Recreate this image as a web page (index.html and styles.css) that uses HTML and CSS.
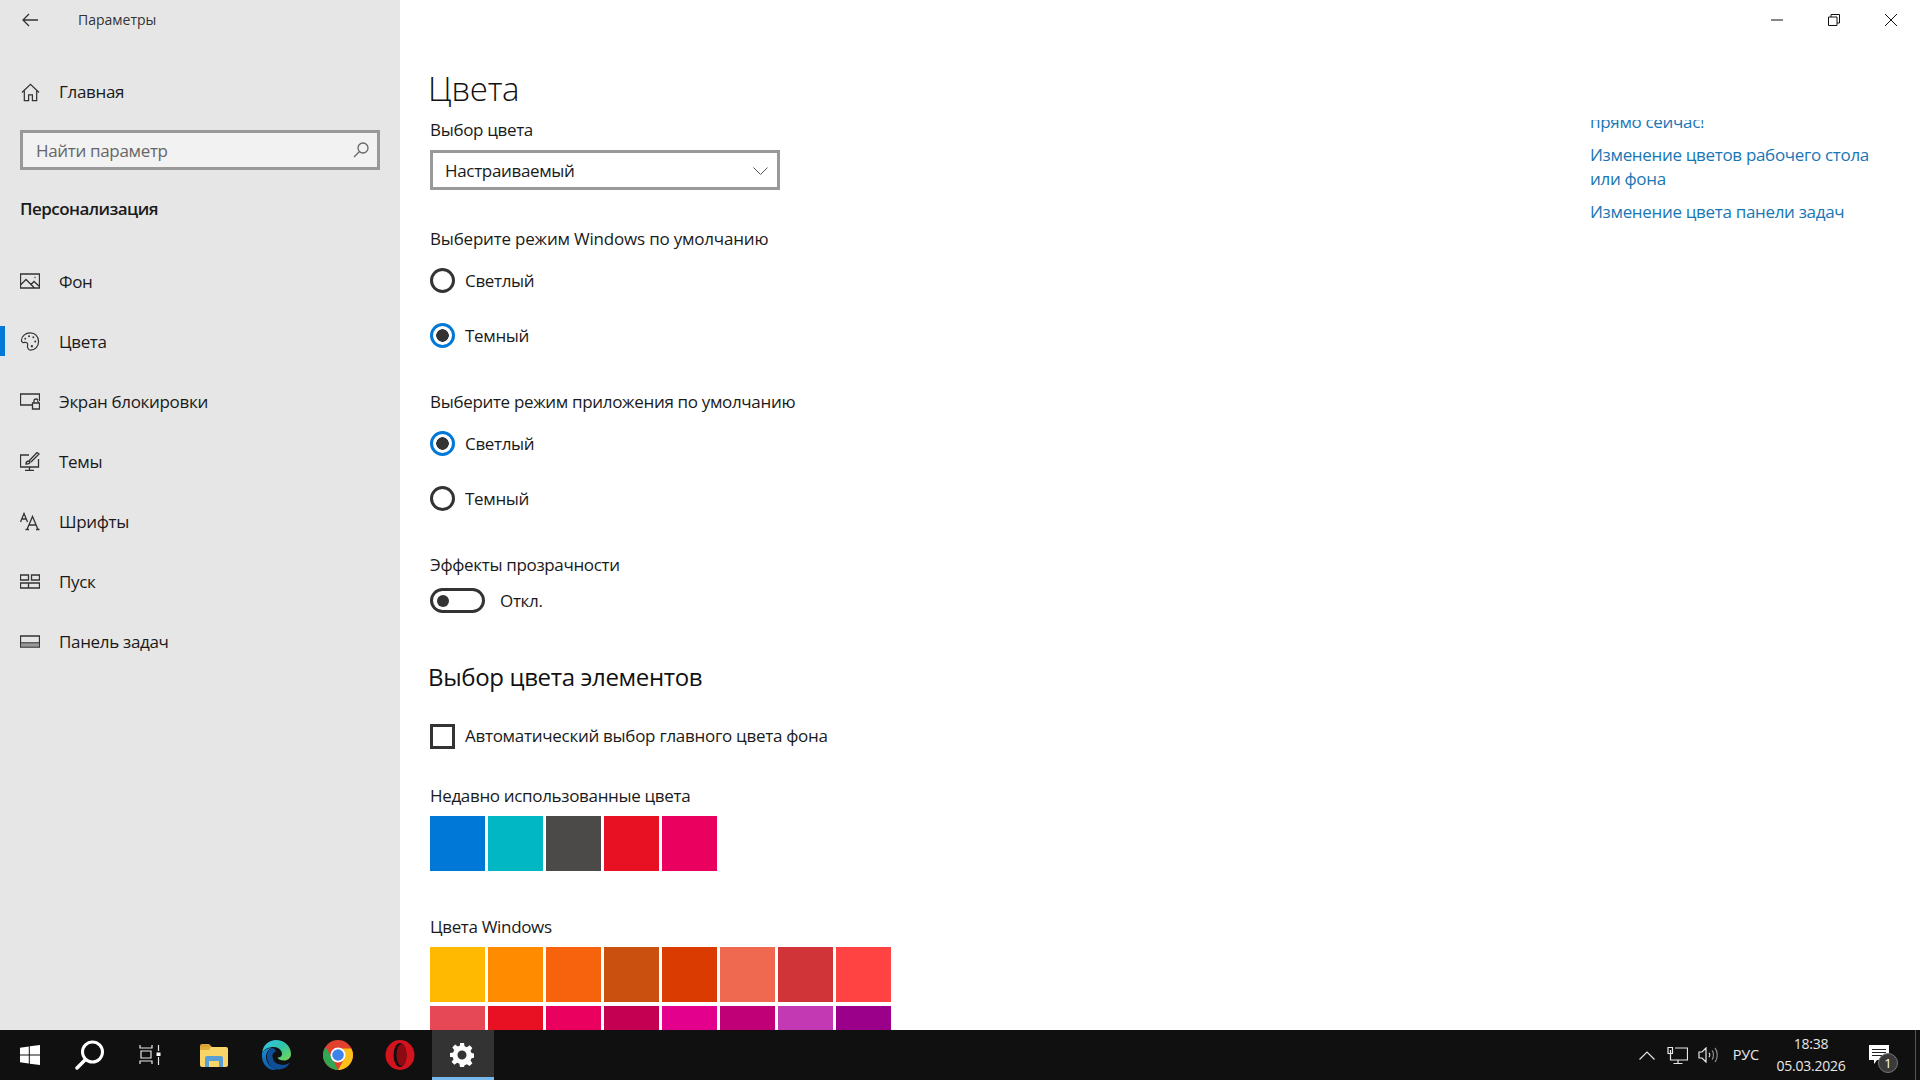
FILE: index.html
```html
<!DOCTYPE html>
<html lang="ru">
<head>
<meta charset="utf-8">
<title>Параметры</title>
<link rel="stylesheet" href="styles.css">
</head>
<body>
<div class="window">
  <aside class="sidebar">
    <div class="appbar">
      <svg class="ico back" viewBox="0 0 16 14"><path d="M7 1 1 7l6 6M1 7h15"/></svg>
      <span class="apptitle">Параметры</span>
    </div>
    <div class="home">
      <svg class="ico navico" viewBox="0 0 20 20"><path d="M1 10 10 1.500 19 10M3.500 8v10.500h4.500v-6h4v6h4.500V8"/></svg>
      <span>Главная</span>
    </div>
    <div class="search">
      <span>Найти параметр</span>
      <svg class="ico searchico" viewBox="0 0 16 16"><circle cx="10" cy="6" r="5"/><path d="M6.500 9.500 1 15"/></svg>
    </div>
    <div class="section">Персонализация</div>
    <nav class="nav">
      <div class="navitem">
        <svg class="ico navico" viewBox="0 0 20 16"><path d="M.5.5h19v14H.5zM.5 11.500 6 6l8.500 8.500M11 11l3-3 5.500 5M.5 14.500h19"/><path d="M14.500 4h1"/></svg>
        <span>Фон</span>
      </div>
      <div class="navitem active">
        <svg class="ico navico" viewBox="0 0 20 20"><path d="M10.500 1C5 1 1 4.500 1 9c0 1.500 1.500 2.500 3 2 2-.5 4 .500 3.500 2.500-.5 2 0 5.500 3 5.500 5 0 8.500-4 8.500-9s-3.500-9-8.500-9z"/><circle class="dot" cx="5" cy="7" r="1"/><circle class="dot" cx="9" cy="4.500" r="1"/><circle class="dot" cx="13.500" cy="5.500" r="1"/><circle class="dot" cx="15.500" cy="10" r="1"/><circle class="dot" cx="12" cy="15" r="1.200"/></svg>
        <span>Цвета</span>
      </div>
      <div class="navitem">
        <svg class="ico navico" viewBox="0 0 20 16"><path d="M12 11.500H.5V.5h19v7M12.500 9.500h7v6h-7zM14 9.500V7.500a2 2 0 0 1 4 0v2"/></svg>
        <span>Экран блокировки</span>
      </div>
      <div class="navitem">
        <svg class="ico navico" viewBox="0 0 20 19"><path d="M9 3H.5v12h18V7M9.500 15v3M5 18.500h9"/><path d="M6 12c0-2 1-3 3-3l1 1c0 2-2 2-4 2zM9 9l8-8.500 2 1.500-8 8"/></svg>
        <span>Темы</span>
      </div>
      <div class="navitem">
        <svg class="ico navico" viewBox="0 0 20 17"><path d="M.5 9 4 .5 7.500 9M2 6h4M7 16.500 12.500 3.500l5.500 13M9 12h7M5.500 16.500h3.500M16 16.500h3.500"/></svg>
        <span>Шрифты</span>
      </div>
      <div class="navitem">
        <svg class="ico navico" viewBox="0 0 20 14"><path d="M.5.500h8v5h-8zM11.500.500h8v5h-8zM.5 8.500h8v5h-8zM8.500 8.500h11v5h-11z"/></svg>
        <span>Пуск</span>
      </div>
      <div class="navitem">
        <svg class="ico navico" viewBox="0 0 20 12"><path d="M.5.500h19v11H.5zM.5 7.500h19"/><path class="fillbar" d="M1 8h18v3H1z"/></svg>
        <span>Панель задач</span>
      </div>
    </nav>
  </aside>

  <main class="main">
    <div class="titlebar">
      <div class="winbtn"><svg class="ico winico" viewBox="0 0 12 12"><path d="M0 6h12"/></svg></div>
      <div class="winbtn"><svg class="ico winico" viewBox="0 0 12 12"><path d="M.5 3h8.500v8.500H.5zM3 3V.5h8.500V9H9"/></svg></div>
      <div class="winbtn"><svg class="ico winico" viewBox="0 0 12 12"><path d="M0 0l12 12M12 0 0 12"/></svg></div>
    </div>
    <div class="columns">
      <section class="content">
        <h1 class="h1">Цвета</h1>
        <div class="label m9">Выбор цвета</div>
        <div class="select m8">
          <span>Настраиваемый</span>
          <svg class="ico chev" viewBox="0 0 15 8"><path d="M.5.5l7 7 7-7"/></svg>
        </div>
        <div class="label m37 latin">Выберите режим Windows по умолчанию</div>
        <div class="radio first"><i class="circle"></i><span>Светлый</span></div>
        <div class="radio"><i class="circle on"></i><span>Темный</span></div>
        <div class="label m28">Выберите режим приложения по умолчанию</div>
        <div class="radio first"><i class="circle on"></i><span>Светлый</span></div>
        <div class="radio"><i class="circle"></i><span>Темный</span></div>
        <div class="label m28">Эффекты прозрачности</div>
        <div class="toggle-row"><i class="toggle"><b></b></i><span>Откл.</span></div>
        <h2 class="h2">Выбор цвета элементов</h2>
        <div class="check-row"><i class="check"></i><span>Автоматический выбор главного цвета фона</span></div>
        <div class="label m34">Недавно использованные цвета</div>
        <div class="swatches m8">
          <i class="c1"></i><i class="c2"></i><i class="c3"></i><i class="c4"></i><i class="c5"></i>
        </div>
        <div class="label m44">Цвета Windows</div>
        <div class="swatches m8">
          <i class="w1"></i><i class="w2"></i><i class="w3"></i><i class="w4"></i><i class="w5"></i><i class="w6"></i><i class="w7"></i><i class="w8"></i>
          <i class="w9"></i><i class="c4"></i><i class="c5"></i><i class="w12"></i><i class="w13"></i><i class="w14"></i><i class="w15"></i><i class="w16"></i>
        </div>
      </section>
      <aside class="help">
        <div class="help-inner">
          <div class="link">прямо сейчас!</div>
          <div class="link gap">Изменение цветов рабочего стола или фона</div>
          <div class="link gap">Изменение цвета панели задач</div>
        </div>
      </aside>
    </div>
  </main>
</div>

<footer class="taskbar">
  <div class="tb tb-start"><svg class="tbico" width="20" height="20" viewBox="0 0 20 20"><path class="white" d="M0 2.800 8.800 1.500v8H0zM9.800 1.300 20 0v9.500H9.800zM0 10.500h8.800v8L0 17.200zM9.800 10.500H20V20L9.800 18.700z"/></svg></div>
  <div class="tb"><svg class="tbico line-w" width="30" height="30" viewBox="0 0 30 30"><circle cx="17.500" cy="12" r="10"/><path class="thick" d="M10.500 19.500 2 28"/></svg></div>
  <div class="tb"><svg class="tbico thin-w" width="26" height="20" viewBox="0 0 26 20"><path d="M1 0v3h12V0M1 19v-3h12v3M2 6h10v7H2zM19.500 0v6M19.500 12v8"/><path class="white" d="M17.500 7.500h4v3.500h-4z"/></svg></div>
  <div class="tb"><svg class="tbico" width="28" height="24" viewBox="0 0 28 24"><path fill="#d9a336" d="M0 3a2 2 0 0 1 2-2h7l3 3h-12z"/><path fill="#f9d568" d="M0 4h26a2 2 0 0 1 2 2v16a2 2 0 0 1-2 2H2a2 2 0 0 1-2-2z"/><path fill="#e0ae3c" d="M0 4h11l-2 3H0z"/><path fill="#5a9fd4" d="M5 24V15a2 2 0 0 1 2-2h14a2 2 0 0 1 2 2v9h-4v-6h-10v6z"/></svg></div>
  <div class="tb"><svg class="tbico" width="30" height="30" viewBox="0 0 30 30"><defs><linearGradient id="eg" x1="0" y1="0" x2="1" y2="1"><stop offset="0" stop-color="#35c1f1"/><stop offset=".5" stop-color="#2fc4a8"/><stop offset="1" stop-color="#7cd64a"/></linearGradient><linearGradient id="eb" x1="0" y1="0" x2="0" y2="1"><stop offset="0" stop-color="#1b8fd6"/><stop offset="1" stop-color="#0c59a4"/></linearGradient></defs><path fill="url(#eg)" d="M1 13C2 5 8 0 15 0c8 0 15 6 15 14 0 4-3 6.500-7 6.500-3 0-6-1-6.500-3 2.500 0 4.500-1 4.500-3.500 0-4-4-7-8-7-5 0-10 2-12 6z"/><path fill="url(#eb)" d="M1 13c3-4 7-5 10-5-4 1-6 5-6 9 0 6 5 11 11 12-1 0-2 1-3 1C6 30 0 23 1 13z"/><path fill="#0e4f98" d="M11 8c-4 2-5.500 6-5 10 .5 6 6 11.500 11 11.500 5 0 9-2 12-7-3 2-6 3-10 2-5-1-7-4-7.500-8C11 14 13 12 15 11.500c-1-2-2-3.500-4-3.500z"/></svg></div>
  <div class="tb"><svg class="tbico" width="30" height="30" viewBox="0 0 30 30"><circle cx="15" cy="15" r="15" fill="#e3412f"/><path fill="#fbc118" d="M15 8.500h13.200C29.500 10.500 30 13 30 15c0 8-6.500 15-15 15l6.500-11.500z"/><path fill="#33a651" d="M2.500 7 9.500 18.500 15 30C7 30 0 23 0 15c0-3 1-6 2.500-8z"/><circle cx="15" cy="15" r="7.500" fill="#fff"/><circle cx="15" cy="15" r="5.800" fill="#3f83ea"/></svg></div>
  <div class="tb"><svg class="tbico" width="30" height="30" viewBox="0 0 30 30"><ellipse cx="15" cy="15" rx="14.500" ry="15" fill="#d3141e"/><ellipse cx="15" cy="15" rx="6.500" ry="12" fill="#101010"/><ellipse cx="16.500" cy="15" rx="5" ry="11" fill="#8d0a12"/></svg></div>
  <div class="tb tb-active"><svg class="tbico" width="24" height="24" viewBox="0 0 24 24"><path class="white" fill-rule="evenodd" d="M10 0h4l.6 3.200 2.300 1 2.700-1.900 2.800 2.800-1.900 2.700 1 2.300 3.200.6v4l-3.200.6-1 2.300 1.900 2.700-2.800 2.800-2.700-1.900-2.300 1L14 24h-4l-.6-3.200-2.300-1-2.700 1.900-2.800-2.800 1.900-2.700-1-2.300L0 14v-4l3.200-.6 1-2.300-1.900-2.700 2.800-2.800 2.700 1.900 2.300-1zM12 7.500a4.500 4.500 0 1 0 0 9 4.500 4.500 0 0 0 0-9z"/></svg></div>
  <div class="tray">
    <svg class="trayico thin-w wide" width="16" height="9" viewBox="0 0 16 9"><path d="M.5 8.500 8 1l7.500 7.500"/></svg>
    <svg class="trayico thin-w net" width="21" height="17" viewBox="0 0 21 17"><path d="M3.500 3V13h17V1H8M11 13v3M6.500 16.500h9M1 .500h4.500v6H1z"/></svg>
    <svg class="trayico thin-w spk" width="21" height="16" viewBox="0 0 21 16"><path d="M1 5h3l4-4v14l-4-4H1zM11 6c1 1 1 3 0 4"/><path class="wave" d="M14 3.500c2 2 2 7 0 9M17 1c3 3.500 3 10.500 0 14"/></svg>
    <span class="lang">РУС</span>
    <div class="clock"><span>18:38</span><span>05.03.2026</span></div>
    <div class="notif">
      <svg width="20" height="20" viewBox="0 0 20 20"><path class="white" d="M0 0h20v15H8l-3 4v-4H0z"/><path class="darkline" d="M3 4.500h14M3 7.500h14M3 10.500h10"/></svg>
      <span class="badge">1</span>
    </div>
  </div>
  <i class="tb-edge"></i>
</footer>
</body>
</html>
```
FILE: styles.css
```css
* { box-sizing: border-box; }
html, body { margin: 0; padding: 0; height: 100%; overflow: hidden; }
body {
  display: flex;
  flex-direction: column;
  width: 1920px;
  height: 1080px;
  background: #fff;
  color: #1a1a1a;
  font-family: "Open Sans", "Noto Sans", sans-serif;
  font-size: 17px;
  letter-spacing: -0.33px;
  line-height: 24px;
}
i { display: block; font-style: normal; }
.ico { fill: none; stroke: #333; stroke-width: 1.3; display: block; }

.window { display: flex; height: 1030px; overflow: hidden; }

/* sidebar */
.sidebar { width: 400px; flex: none; background: #e6e6e6; }
.appbar { display: flex; align-items: center; height: 40px; padding-left: 22px; }
.back { width: 16px; height: 14px; }
.apptitle { margin-left: 40px; font-size: 14px; color: #333; letter-spacing: 0; }
.home { display: flex; align-items: center; height: 24px; margin-top: 40px; padding-left: 21px; }
.navico { width: 19px; height: 19px; margin-right: 19px; flex: none; }
.search {
  display: flex;
  justify-content: space-between;
  align-items: center;
  height: 40px;
  margin: 26px 20px 0;
  padding: 2px 8px 0 13px;
  background: #f2f2f2;
  border: 3px solid #999;
  color: #666;
}
.searchico { width: 16px; height: 16px; stroke: #666; margin-top: -2px; }
.section { margin: 27px 0 0 20px; font-weight: 600; letter-spacing: -0.55px; color: #1a1a1a; }
.nav { margin-top: 31px; }
.navitem { display: flex; align-items: center; height: 60px; padding-left: 20px; position: relative; }
.navitem .navico { width: 20px; margin-top: -2px; }
.navitem.active::before { content: ""; position: absolute; left: 0; top: 14px; width: 5px; height: 30px; background: #0078d7; }
.dot { fill: #333; stroke: none; }
.fillbar { fill: #999; stroke: none; }

/* main */
.main { flex: 1; min-width: 0; display: flex; flex-direction: column; }
.titlebar { display: flex; justify-content: flex-end; height: 40px; flex: none; }
.winbtn { width: 57px; display: flex; align-items: center; justify-content: flex-start; padding-left: 22px; }
.winico { width: 12px; height: 12px; stroke: #111; stroke-width: 1; }
.columns { flex: 1; display: flex; justify-content: space-between; padding-left: 30px; min-height: 0; }
.content { width: 520px; }
.h1 { margin: 29px 0 0 -2px; font-size: 33px; font-weight: 300; line-height: 40px; letter-spacing: -0.3px; color: #111; }
.h2 { margin: 48px 0 0 -2px; font-size: 24px; font-weight: 400; line-height: 32px; letter-spacing: -0.35px; color: #111; }
.m8 { margin-top: 8px; }
.m9 { margin-top: 9px; }
.m28 { margin-top: 28px; }
.m34 { margin-top: 35px; }
.m37 { margin-top: 37px; }
.m44 { margin-top: 44px; }
.latin { letter-spacing: -0.2px; }
.select {
  display: flex;
  justify-content: space-between;
  align-items: center;
  width: 350px;
  height: 40px;
  padding: 1px 9px 0 12px;
  border: 3px solid #999;
}
.chev { width: 15px; height: 8px; stroke: #555; stroke-width: 1; }
.radio { display: flex; align-items: center; height: 55px; padding-top: 1px; }
.radio.first { margin-top: 1px; }
.radio span { padding-top: 1px; }
.circle { width: 25px; height: 25px; border: 3px solid #333; border-radius: 50%; margin-right: 10px; flex: none; }
.circle.on { border-color: #0078d7; background: radial-gradient(circle, #333 0 6px, #fff 6.500px); }
.toggle-row { display: flex; align-items: center; height: 25px; margin-top: 11px; }
.toggle-row span { padding-top: 1px; }
.toggle { width: 55px; height: 25px; border: 3px solid #333; border-radius: 13px; margin-right: 15px; padding: 3.500px 0 0 4px; }
.toggle b { display: block; width: 12px; height: 12px; border-radius: 50%; background: #333; }
.check-row { display: flex; align-items: center; height: 25px; margin-top: 31px; }
.check-row span { margin-top: -1px; letter-spacing: -0.28px; }
.check { width: 25px; height: 25px; border: 3px solid #333; margin-right: 10px; flex: none; }
.swatches { display: grid; grid-template-columns: repeat(8, 55px); grid-auto-rows: 55px; column-gap: 3px; row-gap: 4px; }
.c1 { background: #0078d7; } .c2 { background: #00b7c3; } .c3 { background: #4c4a48; } .c4 { background: #e81123; } .c5 { background: #ea005e; }
.w1 { background: #ffb900; } .w2 { background: #ff8c00; } .w3 { background: #f7630c; } .w4 { background: #ca5010; }
.w5 { background: #da3b01; } .w6 { background: #ef6950; } .w7 { background: #d13438; } .w8 { background: #ff4343; }
.w9 { background: #e74856; } .w12 { background: #c30052; } .w13 { background: #e3008c; } .w14 { background: #bf0077; } .w15 { background: #c239b3; } .w16 { background: #9a0089; }

.help { width: 330px; flex: none; margin-top: 80px; height: 200px; overflow: hidden; }
.help-inner { width: 290px; margin-top: -10px; }
.link { color: #1a76b5; letter-spacing: -0.32px; }
.gap { margin-top: 9px; }

/* taskbar */
.taskbar { display: flex; align-items: stretch; height: 50px; flex: none; background: #101010; position: relative; }
.tb { width: 62px; display: flex; align-items: center; justify-content: center; flex: none; padding-right: 2px; }
.tb-start { width: 59.500px; padding-right: 0; }
.tb-active { background: #333; border-bottom: 3px solid #76b9ed; padding-top: 3px; }
.white { fill: #fff; stroke: none; }
.line-w { fill: none; stroke: #fff; stroke-width: 3; }
.thick { stroke-width: 3.500; stroke-linecap: round; }
.thin-w { fill: none; stroke: #e8e8e8; stroke-width: 1.200; }
.wave { stroke: #8a8a8a; }
.tray { margin-left: auto; display: flex; align-items: center; padding-right: 31px; color: #e8e8e8; }
.trayico { flex: none; margin-right: 11px; }
.wide { margin-right: 12px; }
.net { margin-right: 10px; }
.spk { margin-right: 14px; }
.lang { font-size: 14.500px; letter-spacing: -0.2px; }
.clock { display: flex; flex-direction: column; align-items: center; width: 104px; margin-right: 6px; font-size: 14px; line-height: 22px; letter-spacing: -0.25px; }
.notif { position: relative; width: 20px; height: 20px; }
.notif svg { display: block; }
.darkline { fill: none; stroke: #222; stroke-width: 1; }
.badge {
  position: absolute;
  left: 9px;
  top: 8px;
  width: 20px;
  height: 20px;
  border-radius: 50%;
  background: #3a3a3a;
  border: 1px solid #777;
  color: #fff;
  font-size: 13px;
  line-height: 18px;
  text-align: center;
  letter-spacing: 0;
}
.tb-edge { position: absolute; right: 4px; top: 0; bottom: 0; width: 1px; background: #555; }
```
